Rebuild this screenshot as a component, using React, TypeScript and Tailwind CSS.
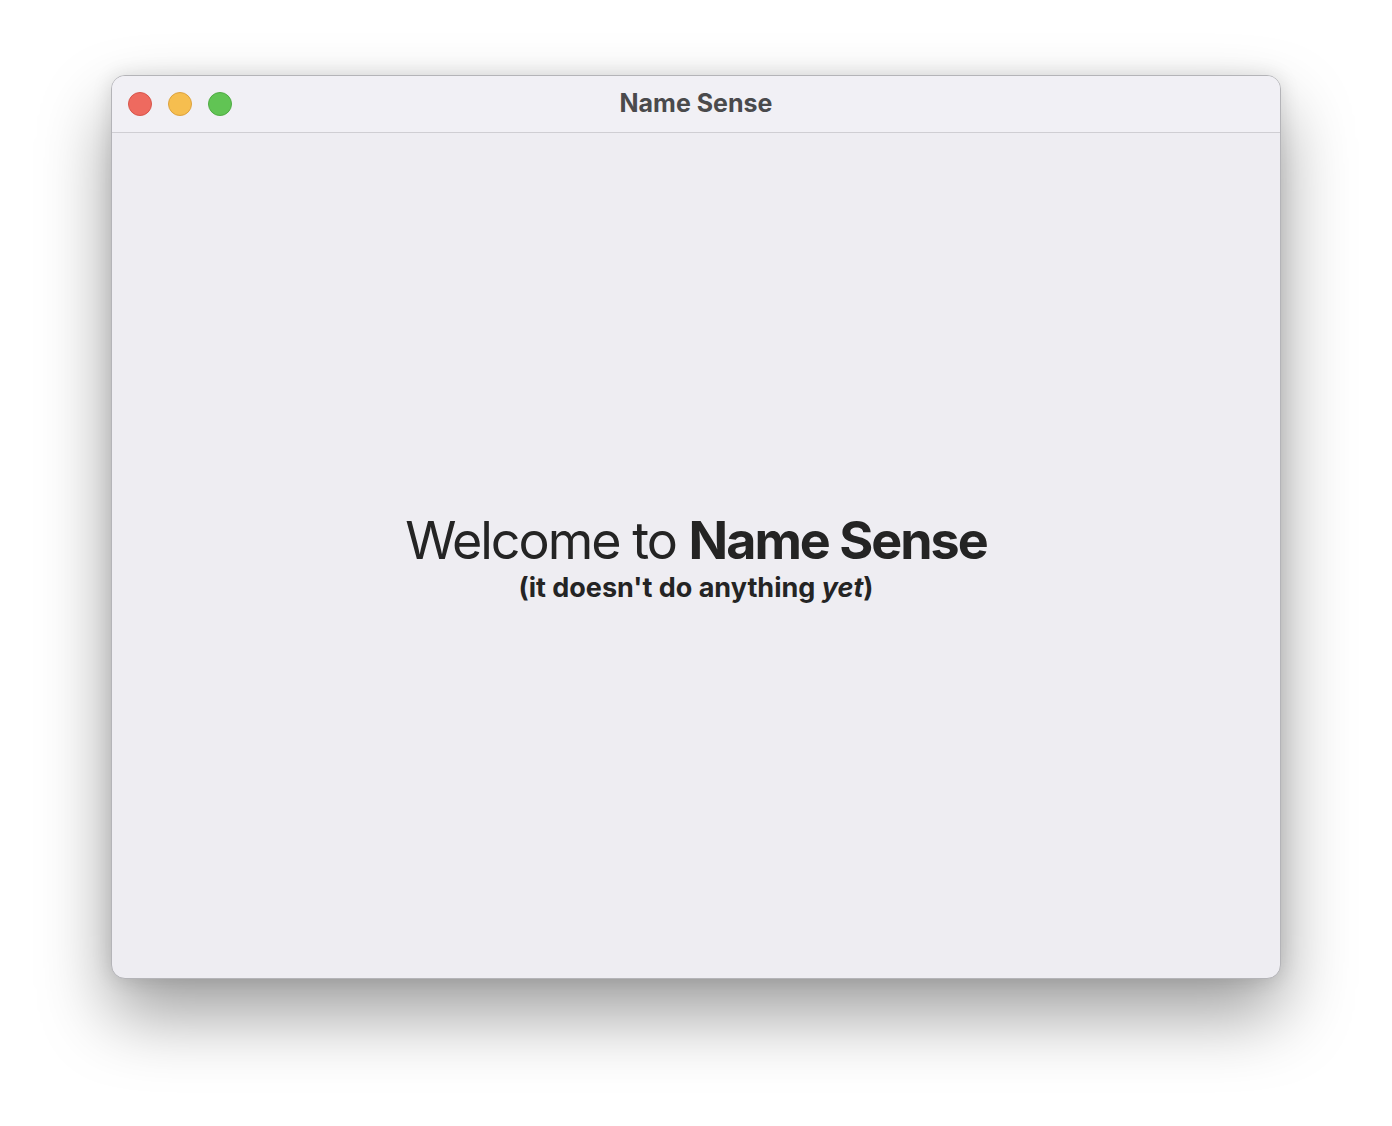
export default function App() {
  return (
    <div
      className="w-[1392px] h-[1126px] bg-white flex justify-center pt-[75px]"
      style={{ fontFamily: "Inter, 'Noto Sans', sans-serif" }}
    >
      <div className="w-[1170px] h-[904px] rounded-[14px] bg-[#eeedf2] border border-[#b4b4b8] shadow-[0_36px_70px_rgba(0,0,0,0.38),0_0_20px_rgba(0,0,0,0.12)] flex flex-col overflow-hidden">
        <div className="h-[57px] shrink-0 bg-[#f1f0f5] border-b border-[#cfced3] flex items-center relative">
          <div className="flex gap-[16px] pl-[16px]">
            <div className="w-[24px] h-[24px] rounded-full bg-[#ee6a5f] border border-[#d8554b]" />
            <div className="w-[24px] h-[24px] rounded-full bg-[#f6be4f] border border-[#dda23e]" />
            <div className="w-[24px] h-[24px] rounded-full bg-[#61c454] border border-[#4fab43]" />
          </div>
          <div className="absolute inset-0 flex items-center justify-center text-[25px] font-bold text-[#4a4a4c] pointer-events-none">
            Name Sense
          </div>
        </div>
        <div className="flex-1 flex flex-col items-center justify-center text-[#242424] pt-[3px]">
          <div className="text-[52px] leading-[60px] tracking-[-2px] font-normal">
            Welcome to <span className="font-bold">Name Sense</span>
          </div>
          <div className="text-[27px] leading-[30px] font-bold mt-[2px]">
            (it doesn't do anything <i>yet</i>)
          </div>
        </div>
      </div>
    </div>
  );
}
